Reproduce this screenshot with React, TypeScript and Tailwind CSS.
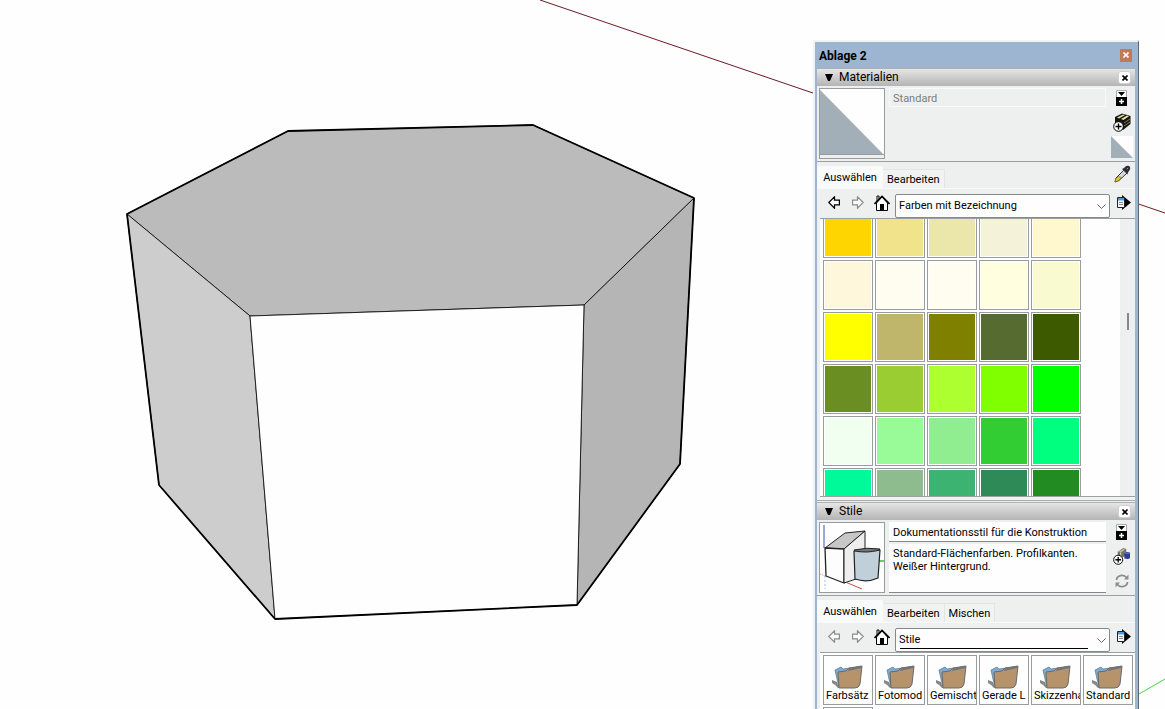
const NAMED_COLORS = [
  '#ffd500', '#f1e28c', '#ebe6aa', '#f4f3da', '#fff8cf',
  '#fff7dc', '#fffcf0', '#fffcf0', '#ffffe0', '#fafad0',
  '#ffff00', '#bfb66b', '#808000', '#556b2f', '#3d5a00',
  '#6b8e23', '#9acd32', '#adff2f', '#80ff00', '#00ff00',
  '#f0fff0', '#98fb98', '#90ee90', '#32cd32', '#00ff7f',
  '#00fa9a', '#8fbc8f', '#3cb371', '#2e8b57', '#228b22',
]

const STYLE_FOLDERS = ['Farbsätz', 'Fotomod', 'Gemischt', 'Gerade L', 'Skizzenha', 'Standard']

export default function App() {
  return (
    <main className="relative h-screen overflow-hidden bg-[#fefefe] font-[Roboto,'DejaVu_Sans_Condensed',sans-serif] text-[11px] text-black">
      <Viewport />
      <aside className="absolute top-[40px] right-[26px] bottom-0 flex w-[326px] flex-col border-t-2 border-r border-l-2 border-t-[#f0f3f6] border-r-[#666666] border-l-[#f0f3f6] bg-[#9db5d0] pr-[3px] pl-[2px]">
        <header className="flex h-[26px] shrink-0 items-center justify-between pr-[3px] pl-[2px]">
          <h1 className="pt-[2px] text-[12px] font-bold">Ablage 2</h1>
          <button aria-label="Ablage schließen" className="flex h-[13px] w-[12px] items-center justify-center bg-[#c17a58]">
            <Cross className="size-[6px] text-white" />
          </button>
        </header>
        <div className="flex min-h-0 flex-1 flex-col bg-[#eef0f0]">
          <Materials />
          <Styles />
        </div>
      </aside>
    </main>
  )
}

function Materials() {
  return (
    <section>
      <PanelHeader title="Materialien" />
      <div className="flex h-[76px] border-b border-[#9b9fa0] pt-[2px] pl-[2px]">
        <div className="h-[71px] w-[66px] border border-[#999c9e]">
          <svg viewBox="0 0 64 66" className="h-[66px] w-[64px]">
            <path d="M0 0H64V66Z" fill="#fefefe" />
            <path d="M0 1L64 66H0Z" fill="#a3afb8" />
            <path d="M0 65.500H64" stroke="#999c9e" />
          </svg>
        </div>
        <input
          aria-label="Materialname"
          defaultValue="Standard"
          disabled
          className="ml-[4px] h-[19px] min-w-0 flex-1 border border-[#f8f9f9] px-[3px] pt-[2px] text-[#7b7f7b]"
        />
        <div className="flex w-[29px] flex-col items-center pt-[2px] pl-[2px]">
          <button aria-label="Zweites Auswahlfenster"><PaneToggle /></button>
          <button aria-label="Material erstellen" className="mt-[7px]"><BoxIcon /></button>
          <button aria-label="Standardmaterial" className="mt-[4px]">
            <svg viewBox="0 0 22 22" className="size-[22px]">
              <path d="M0 0H22V22Z" fill="#fefefe" />
              <path d="M0 0L22 22H0Z" fill="#a3afb8" />
            </svg>
          </button>
        </div>
      </div>
      <div className="flex items-start justify-between pr-[4px]">
        <Tabs tabs={['Auswählen', 'Bearbeiten']} />
        <button aria-label="Pipette" className="mt-[3px]"><Dropper /></button>
      </div>
      <Toolbar options={['Farben mit Bezeichnung']} label="Materialsammlung" canGoBack />
      <div className="ml-[3px] flex h-[279px] overflow-hidden border-y border-[#9b9fa0] bg-[#fefefe]">
        <div className="-mt-[11px] grid flex-1 grid-cols-[repeat(5,50px)] content-start gap-[2px] pl-[3px]">
          {NAMED_COLORS.map((color, i) => (
            <button
              key={i}
              aria-label={color}
              className="h-[50px] border border-[#999c9e] bg-white p-[1px]"
            >
              <span className="block h-full" style={{ backgroundColor: color }} />
            </button>
          ))}
        </div>
        <div className="flex w-[15px] items-center justify-center bg-[#eef0f0]">
          <span className="mb-[72px] h-[17px] w-[2px] bg-[#85878b]" />
        </div>
      </div>
      <div className="h-[4px] border-b border-[#a9acad] bg-[#f1f3f3]" />
    </section>
  )
}

function Styles() {
  return (
    <section className="flex min-h-0 flex-1 flex-col pt-[1px]">
      <PanelHeader title="Stile" />
      <div className="flex h-[76px] shrink-0 border-b border-[#9b9fa0] pt-[2px] pl-[2px]">
        <div className="h-[71px] w-[66px] border border-[#999c9e] bg-[#fefefe]">
          <StylePreview />
        </div>
        <div className="ml-[4px] flex min-w-0 flex-1 flex-col gap-[2px]">
          <input
            aria-label="Stilname"
            defaultValue="Dokumentationsstil für die Konstruktion"
            className="h-[20px] border-b border-[#85878b] bg-[#fefefe] px-[4px] pt-[2px]"
          />
          <textarea
            aria-label="Stilbeschreibung"
            defaultValue={'Standard-Flächenfarben. Profilkanten.\nWeißer Hintergrund.'}
            className="h-[49px] resize-none overflow-hidden border-b border-[#85878b] bg-[#fefefe] px-[4px] pt-[3px] leading-[13px]"
          />
        </div>
        <div className="flex w-[29px] flex-col items-center pt-[2px] pl-[2px]">
          <button aria-label="Zweites Auswahlfenster"><PaneToggle /></button>
          <button aria-label="Stil erstellen" className="mt-[7px]"><NewStyleIcon /></button>
          <button aria-label="Stil aktualisieren" className="mt-[9px]"><RefreshIcon /></button>
        </div>
      </div>
      <Tabs tabs={['Auswählen', 'Bearbeiten', 'Mischen']} />
      <Toolbar options={['Stile']} label="Stilsammlung" underlined />
      <div className="ml-[3px] grid min-h-0 flex-1 grid-cols-[repeat(6,50px)] content-start gap-[2px] overflow-hidden border-t border-[#9b9fa0] bg-[#fefefe] pt-[2px] pl-[3px]">
        {STYLE_FOLDERS.map((name) => (
          <button key={name} className="flex h-[50px] flex-col items-start overflow-hidden border border-[#999c9e] pt-[9px] pl-[2px]">
            <FolderIcon />
            <span className="w-full overflow-hidden text-left leading-[14px] whitespace-nowrap">{name}</span>
          </button>
        ))}
        <button aria-label="Weitere Stile" className="h-[50px] border border-[#999c9e]" />
      </div>
    </section>
  )
}

function PanelHeader({ title }: { title: string }) {
  return (
    <div className="flex h-[18px] shrink-0 items-center border-t border-[#b0b0b0] bg-linear-to-b from-[#e6e6e6] to-[#b4b4b4] pr-[4px] pl-[8px]">
      <svg viewBox="0 0 8 7" className="h-[7px] w-[8px]">
        <path d="M0 0H8L5 7H3Z" />
      </svg>
      <h2 className="ml-[6px] flex-1 pb-[2px] text-[12px] leading-[14px]">{title}</h2>
      <button aria-label={`${title} schließen`} className="flex size-[13px] items-center justify-center rounded-[3px] border border-[#d0d0d0] bg-white">
        <Cross className="size-[6px]" />
      </button>
    </div>
  )
}

function Tabs({ tabs }: { tabs: string[] }) {
  return (
    <div role="tablist" className="flex h-[26px] shrink-0 items-end pt-[4px]">
      {tabs.map((tab, i) => (
        <button
          key={tab}
          role="tab"
          aria-selected={i === 0}
          className={
            i === 0
              ? 'h-[22px] w-[66px] bg-[#f9fafa] pt-[2px] text-center'
              : 'h-[19px] border-t border-r border-[#e3e5e5] bg-[#f1f3f3] px-[4px] pt-[2px]'
          }
        >
          {tab}
        </button>
      ))}
    </div>
  )
}

type ToolbarProps = {
  options: string[]
  label: string
  canGoBack?: boolean
  underlined?: boolean
}

function Toolbar({ options, label, canGoBack, underlined }: ToolbarProps) {
  return (
    <div className="flex h-[30px] shrink-0 items-start border-t border-[#f8f9f9] pr-[4px] pl-[11px]">
      <button aria-label="Zurück" className={canGoBack ? 'mt-[7px] text-black' : 'mt-[7px] text-[#8b8d8d]'}>
        <ArrowIcon />
      </button>
      <button aria-label="Vorwärts" className="mt-[7px] ml-[12px] text-[#8b8d8d]">
        <ArrowIcon className="-scale-x-100" />
      </button>
      <button aria-label="Im Modell" className="mt-[6px] ml-[10px]"><HouseIcon /></button>
      <div className="relative mt-[5px] ml-[5px] min-w-0 flex-1">
        <select
          aria-label={label}
          className="block h-[24px] w-full appearance-none rounded-[2px] border border-[#85898a] bg-[#fefefe] px-[3px] pt-[1px]"
        >
          {options.map((o) => (
            <option key={o}>{o}</option>
          ))}
        </select>
        {underlined && <span className="absolute right-[22px] bottom-[3px] left-[5px] h-px bg-black" />}
        <svg viewBox="0 0 9 5" className="pointer-events-none absolute top-[10px] right-[4px] h-[5px] w-[9px]" fill="none" stroke="#666">
          <path d="M.5.5L4.500 4.500L8.500.5" />
        </svg>
      </div>
      <button aria-label="Details" className="mt-[6px] ml-[7px]"><DetailsIcon /></button>
    </div>
  )
}

function Viewport() {
  return (
    <svg viewBox="0 0 1165 709" preserveAspectRatio="xMinYMin slice" className="absolute inset-0 h-full w-full">
      <path d="M540 0L1165 213" stroke="#6b1a22" strokeWidth="1" />
      <path d="M1139 694L1165 679" stroke="#46d246" strokeWidth="1" />
      <g stroke="#000" strokeWidth=".8" strokeLinejoin="round">
        <path d="M127 214L288 131L533 125L694 198L584 305L250 316Z" fill="#bbbbbb" />
        <path d="M127 214L250 316L275 619L159 485Z" fill="#cdcdcd" />
        <path d="M584 305L694 198L680 464L577 605Z" fill="#b5b5b5" />
        <path d="M250 316L584 305L577 605L275 619Z" fill="#fefefe" />
        <path d="M127 214L288 131L533 125L694 198L680 464L577 605L275 619L159 485Z" fill="none" strokeWidth="1.800" />
      </g>
    </svg>
  )
}

function Cross({ className }: { className?: string }) {
  return (
    <svg viewBox="0 0 6 6" className={className} stroke="currentColor" strokeWidth="1.600">
      <path d="M.5.5L5.500 5.500M5.500.5L.5 5.500" />
    </svg>
  )
}

function PaneToggle() {
  return (
    <svg viewBox="0 0 11 16" className="h-[16px] w-[11px]">
      <path d="M.5.5H10.500V15.500H.5Z" fill="#fff" stroke="#aaa" />
      <path d="M2 2H9L5.500 6Z" />
      <path d="M0 7H11V16H0Z" />
      <path d="M3 11.500H8M5.500 9V14" stroke="#fff" strokeWidth="1.500" />
    </svg>
  )
}

function PlusBadge() {
  return (
    <>
      <circle cx="5.500" cy="13.500" r="4.800" fill="#fff" stroke="#000" />
      <path d="M2.500 13.500H8.500M5.500 10.500V16.500" stroke="#000" strokeWidth="1.400" />
    </>
  )
}

function BoxIcon() {
  return (
    <svg viewBox="0 0 18 19" className="h-[19px] w-[18px]">
      <path d="M2 4L9 .5L17.500 3V11L10 17L2 14Z" fill="#15150f" />
      <path d="M4 4.500L10 1.500L12 2L6 5.500ZM8 6L14 2.500L16 3.200L10.500 7Z" fill="#e8e0a0" />
      <path d="M11 10L17 6M11 13L17 9" stroke="#86805a" />
      <PlusBadge />
    </svg>
  )
}

function NewStyleIcon() {
  return (
    <svg viewBox="0 0 18 19" className="h-[18px] w-[17px]">
      <path d="M5 5L11 1L14 2V9L8 12L5 10Z" fill="#77746b" />
      <path d="M6 5L11 2L13 2.500L8 6Z" fill="#c9bd8e" />
      <path d="M8 6V11" stroke="#d8d8d8" />
      <path d="M12 6Q15 4.500 18 6V12Q15 13.500 12 12Z" fill="#2c3b9c" />
      <path d="M12 6Q15 7.500 18 6" fill="none" stroke="#7a86c8" />
      <PlusBadge />
    </svg>
  )
}

function RefreshIcon() {
  return (
    <svg viewBox="0 0 14 14" className="size-[14px]" fill="none" stroke="#8b8e8e" strokeWidth="1.800">
      <path d="M1.500 6A5.500 5 0 0 1 11.500 3.500M12.500 8A5.500 5 0 0 1 2.500 10.500" />
      <path d="M13.500 .5V5.500H9ZM.5 13.500V8.500H5Z" fill="#8b8e8e" stroke="none" />
    </svg>
  )
}

function Dropper() {
  return (
    <svg viewBox="0 0 17 18" className="h-[18px] w-[17px]">
      <path d="M10 5L2 13L1 17L5 15.500L13 8Z" fill="#d9dadd" stroke="#333" />
      <path d="M4.500 11.500L1.500 14L1 17L4.500 15.500L7.500 12.500Z" fill="#e2c92c" stroke="#77651b" strokeWidth=".6" />
      <path d="M8 4L10 3L12 1Q15 0 16 2Q17 4 15 6L14 7.500L13.500 9.500Z" fill="#303236" />
      <path d="M13 3L14 4" stroke="#999" />
    </svg>
  )
}

function ArrowIcon({ className = '' }: { className?: string }) {
  return (
    <svg viewBox="0 0 12 13" className={`h-[13px] w-[12px] ${className}`} fill="#fefefe" stroke="currentColor" strokeWidth="1.200">
      <path d="M.8 6.500L6.500.8V4.200H11.400V8.800H6.500V12.200Z" />
    </svg>
  )
}

function HouseIcon() {
  return (
    <svg viewBox="0 0 16 16" className="size-[16px]">
      <path d="M2.500 8V15.500H13.500V8L8 2Z" fill="#fefefe" stroke="#000" />
      <path d="M3 6V1H5V4" fill="#fefefe" stroke="#000" />
      <path d="M.5 9L8 1.300L15.500 9" fill="none" stroke="#000" strokeWidth="1.600" />
      <path d="M6 9H10V15H6Z" />
    </svg>
  )
}

function DetailsIcon() {
  return (
    <svg viewBox="0 0 14 15" className="h-[15px] w-[14px]">
      <path d="M5 0L14 7.500L5 15Z" />
      <path d="M.5 2.500H7.500V12.500H.5Z" fill="#f4f8fc" stroke="#222" />
      <path d="M1 3H7V5.500H1Z" fill="#4a9be0" />
      <path d="M2 7.500H6M2 9.500H6" stroke="#888" />
    </svg>
  )
}

function FolderIcon() {
  return (
    <svg viewBox="0 0 44 24" className="h-[24px] w-[44px] shrink-0">
      <path d="M6 15L11 17L13 23H12Q10 20 6 18Z" fill="#858789" />
      <path d="M9 5L15 2L17 4L24 3L22 22H13L11 14Z" fill="#7eabd6" stroke="#55718d" strokeWidth=".7" />
      <path d="M12 7L20 6L23 3L36 1L34 19Q33 23 29 23H13Z" fill="#b6936b" stroke="#6b6a66" strokeWidth="1" />
      <path d="M23 3L36 1L35.500 3L22 6Z" fill="#717577" />
    </svg>
  )
}

function StylePreview() {
  return (
    <svg viewBox="0 0 64 69" className="h-[69px] w-[64px]" strokeLinejoin="round">
      <path d="M4 2V25" stroke="#3557b0" />
      <path d="M5 53V66" stroke="#a9bedb" strokeDasharray="2 2" />
      <path d="M0 51L5 53" stroke="#d88" strokeDasharray="1 1" />
      <path d="M23 58L42 66" stroke="#b5583f" />
      <path d="M59 38H64" stroke="#33bb33" strokeWidth="1.500" />
      <path d="M5 25L25 10L45 8L24 26Z" fill="#c7c7c7" stroke="#222" />
      <path d="M5 25L24 26V60L6 53Z" fill="#fdfdfd" stroke="#222" strokeWidth="1.300" />
      <path d="M24 26L45 8V53L24 60Z" fill="#eeeeee" stroke="#222" />
      <path d="M34 28L60 27L58 55Q47 60 35 56Z" fill="#bfd0da" stroke="#222" strokeWidth="1.200" />
      <path d="M34 27Q47 24 60 26Q60 28 47 29Q35 29 34 27Z" fill="#777" stroke="#222" />
    </svg>
  )
}
